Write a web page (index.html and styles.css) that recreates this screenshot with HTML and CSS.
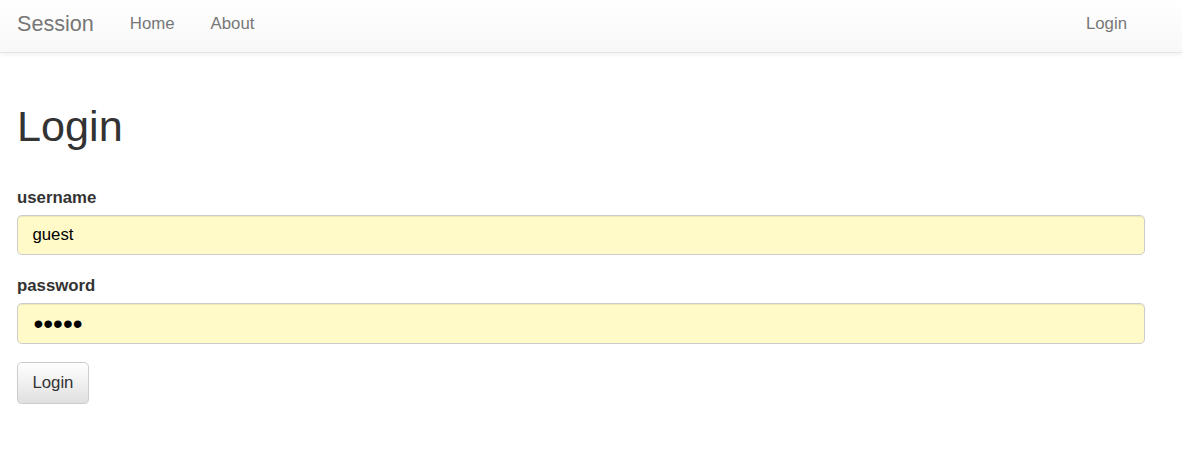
FILE: index.html
```html
<!DOCTYPE html>
<html>
<head>
<meta charset="utf-8">
<title>Session</title>
<link rel="stylesheet" href="styles.css">
</head>
<body>
<nav class="navbar">
  <div class="nav-inner">
    <a class="brand" href="#">Session</a>
    <ul class="nav">
      <li><a href="#">Home</a></li>
      <li><a href="#">About</a></li>
    </ul>
    <ul class="nav nav-right">
      <li><a href="#">Login</a></li>
    </ul>
  </div>
</nav>
<main class="container">
  <h1 class="title">Login</h1>
  <form class="form">
    <div class="form-group">
      <label class="label" for="username">username</label>
      <input class="input" id="username" type="text" value="guest">
    </div>
    <div class="form-group">
      <label class="label" for="password">password</label>
      <input class="input input-password" id="password" type="password" value="guest">
    </div>
    <button class="btn" type="button">Login</button>
  </form>
</main>
</body>
</html>
```

FILE: styles.css
```css
* { box-sizing: border-box; }
html, body { margin: 0; padding: 0; }
body {
  font-family: "Liberation Sans", Arial, sans-serif;
  font-size: 16.8px;
  line-height: 24px;
  color: #333;
  background: #fff;
}
.navbar {
  height: 53px;
  background: linear-gradient(to bottom, #ffffff 0%, #f8f8f8 100%);
  border-bottom: 1px solid #e4e4e4;
  box-shadow: inset 0 1px 0 rgba(255,255,255,.15), 0 1px 5px rgba(0,0,0,.075);
}
.nav-inner {
  display: flex;
  align-items: flex-start;
  height: 52px;
  padding: 12px 37px 0 17px;
}
.brand {
  font-size: 21.6px;
  color: #777;
  text-decoration: none;
  padding-right: 18px;
  line-height: 24px;
}
.nav {
  display: flex;
  list-style: none;
  margin: 0;
  padding: 0;
}
.nav a {
  display: block;
  padding: 0 18px;
  color: #777;
  text-decoration: none;
  line-height: 24px;
}
.nav-right { margin-left: auto; }
.container {
  padding: 0 37px 0 17px;
}
.title {
  font-size: 43.2px;
  font-weight: 500;
  line-height: 47.5px;
  margin: 50px 0 34px;
  color: #333;
}
.form-group { margin-bottom: 18px; }
.label {
  display: block;
  font-weight: bold;
  padding-top: 1px;
  margin-bottom: 5px;
}
.input {
  display: block;
  width: 100%;
  height: 40.8px;
  padding: 7.2px 14.4px;
  font-family: inherit;
  font-size: 16.8px;
  color: #000;
  background: #fffac8;
  border: 1px solid #ccc;
  border-radius: 4.8px;
  box-shadow: inset 0 1px 1px rgba(0,0,0,.075);
}
.input-password {
  font-size: 28px;
  padding: 0 14.4px 0 15.5px;
  letter-spacing: 0;
}
.btn {
  display: inline-block;
  font-family: inherit;
  font-size: 16.8px;
  line-height: 24px;
  padding: 8px 14.4px 7.5px;
  color: #333;
  background: linear-gradient(to bottom, #ffffff 0%, #e0e0e0 100%);
  border: 1px solid #ccc;
  border-radius: 4.8px;
  box-shadow: inset 0 1px 0 rgba(255,255,255,.15), 0 1px 1px rgba(0,0,0,.075);
  cursor: pointer;
}
```
